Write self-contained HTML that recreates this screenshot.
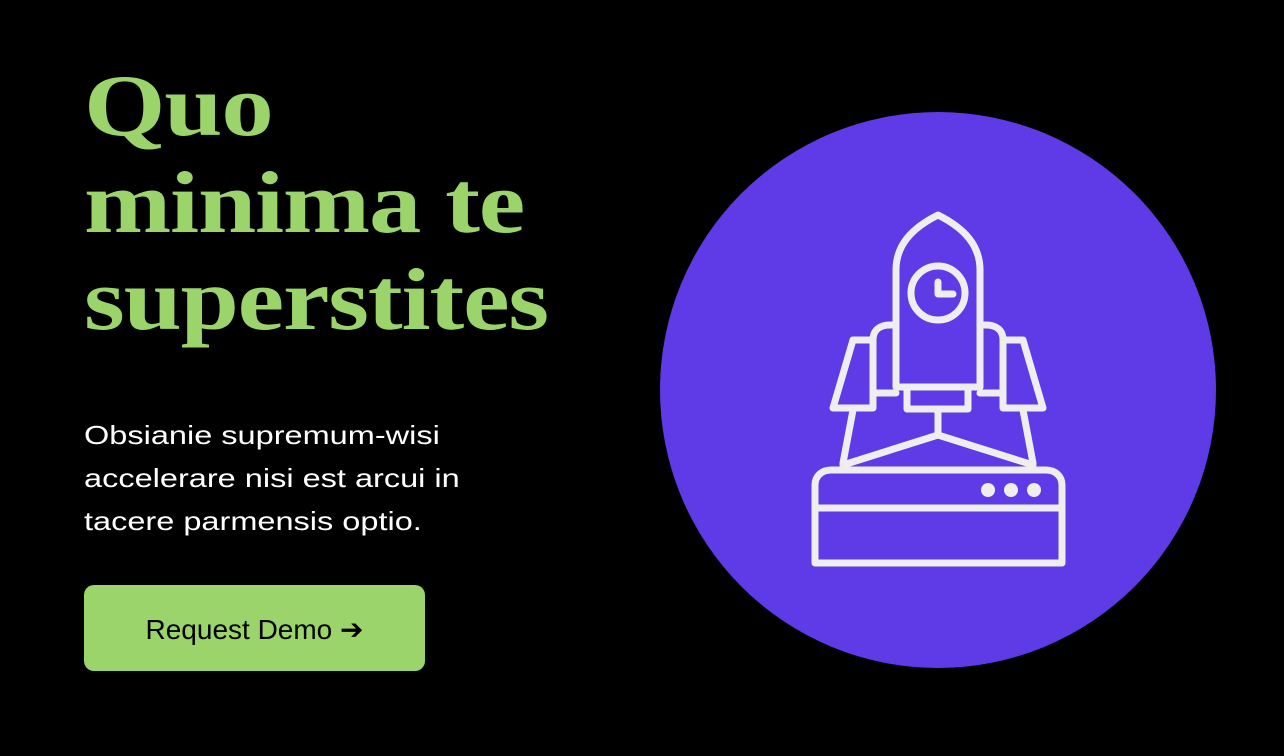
<!DOCTYPE html>
<html><head><style>
body{margin:0;width:1284px;height:756px;background:#000;overflow:hidden;position:relative;font-family:"Liberation Sans",sans-serif}
h1{position:absolute;left:84px;top:58px;margin:0;color:#9bd46a;font-family:"Liberation Serif",serif;font-weight:bold;font-size:88px;line-height:97px;letter-spacing:-1px;transform:scaleX(1.19);transform-origin:0 0}
p{position:absolute;left:84px;top:414px;margin:0;color:#fff;font-size:26px;line-height:43px;transform:scaleX(1.25);transform-origin:0 0;white-space:nowrap}
.btn{position:absolute;left:84px;top:585px;width:341px;height:86px;background:#9bd46a;border-radius:10px;color:#000;font-size:28px;line-height:90px;text-align:center}
.c{position:absolute;left:660px;top:112px;width:556px;height:556px;border-radius:50%;background:#5e3be6}
svg{position:absolute;left:0;top:0}
</style></head><body>
<h1>Quo<br>minima te<br>superstites</h1>
<p>Obsianie supremum-wisi<br>accelerare nisi est arcui in<br>tacere parmensis optio.</p>
<div class="btn">Request Demo ➔</div>
<div class="c"></div>
<svg width="1284" height="756" fill="none" stroke="#eee" stroke-width="7" stroke-linejoin="round" stroke-linecap="round">
<path d="M896 387V270C896 245 912 228 938 215C964 228 980 245 980 270V387Z"/>
<circle cx="938" cy="293" r="27"/>
<path d="M938 282V294H953"/>
<rect x="907" y="387" width="61" height="22"/>
<path d="M896 393H873V340C873 330 880 325 890 325H896"/>
<path d="M980 393H1003V340C1003 330 996 325 986 325H980"/>
<path d="M853 340H873V408H833Z"/>
<path d="M1023 340H1003V408H1043Z"/>
<path d="M938 409V435L843 465M938 435L1033 465M853 410L843 463M1023 410L1033 463"/>
<path d="M815 563V485C815 476 822 470 831 470H1046C1055 470 1062 476 1062 485V563Z"/>
<path d="M815 508H1062"/>
<g fill="#eee" stroke="none"><circle cx="988" cy="490" r="7"/><circle cx="1011" cy="490" r="7"/><circle cx="1034" cy="490" r="7"/></g>
</svg>
</body></html>
